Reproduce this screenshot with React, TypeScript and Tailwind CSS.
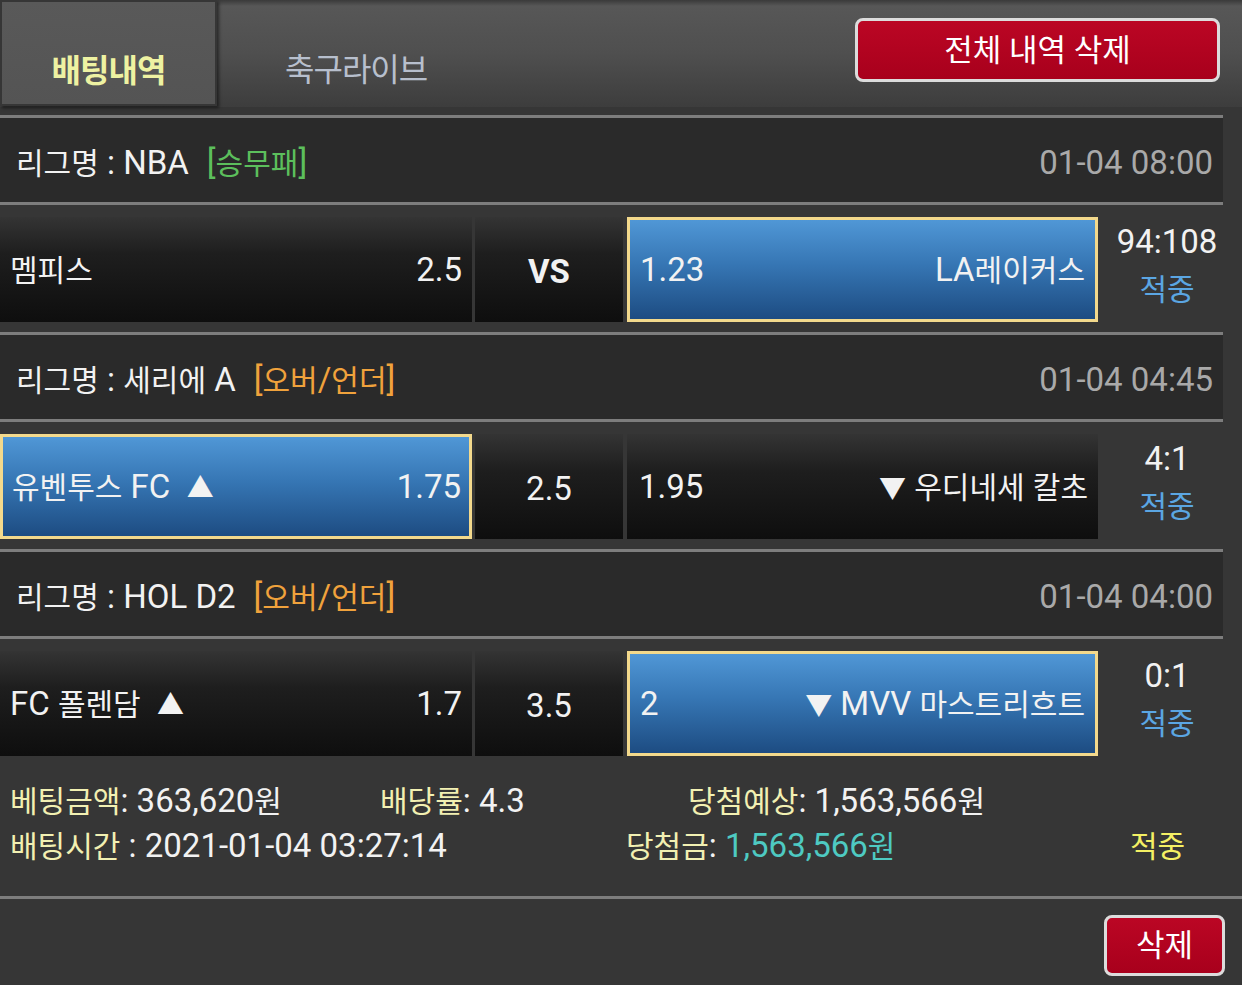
import React from "react";

function H({ t, k = "text-[30px]" }: { t: string; k?: string }) {
  const parts = t.split(/([\uAC00-\uD7A3\u3131-\u318E]+|[▲▼])/).filter((p) => p !== "");
  return (
    <>
      {parts.map((p, i) =>
        /^[▲▼]$/.test(p) ? (
          <span key={i} className="text-[27px]">
            {p}
          </span>
        ) : /[\uAC00-\uD7A3\u3131-\u318E]/.test(p) ? (
          <span key={i} className={k}>
            {p}
          </span>
        ) : (
          <span key={i}>{p}</span>
        )
      )}
    </>
  );
}

type Side = { text: string; odd: string; selected: boolean };
type Game = {
  league: string;
  tag: string;
  tagColor: string;
  date: string;
  home: Side;
  mid: string;
  midBold?: boolean;
  away: Side;
  score: string;
};

const games: Game[] = [
  {
    league: "NBA",
    tag: "[승무패]",
    tagColor: "text-[#5cbf5c]",
    date: "01-04 08:00",
    home: { text: "멤피스", odd: "2.5", selected: false },
    mid: "VS",
    midBold: true,
    away: { text: "LA레이커스", odd: "1.23", selected: true },
    score: "94:108",
  },
  {
    league: "세리에 A",
    tag: "[오버/언더]",
    tagColor: "text-[#f0a23c]",
    date: "01-04 04:45",
    home: { text: "유벤투스 FC  ▲", odd: "1.75", selected: true },
    mid: "2.5",
    away: { text: "▼ 우디네세 칼초", odd: "1.95", selected: false },
    score: "4:1",
  },
  {
    league: "HOL D2",
    tag: "[오버/언더]",
    tagColor: "text-[#f0a23c]",
    date: "01-04 04:00",
    home: { text: "FC 폴렌담  ▲", odd: "1.7", selected: false },
    mid: "3.5",
    away: { text: "▼ MVV 마스트리흐트", odd: "2", selected: true },
    score: "0:1",
  },
];

const darkCell =
  "bg-[linear-gradient(to_bottom,#343434_0%,#1e1e1e_35%,#0e0e0e_100%)]";
const blueCell =
  "bg-[linear-gradient(to_bottom,#5097d6_0%,#3676b4_45%,#1d4c82_100%)] border-[3px] border-[#f3d98c]";

function HomeCell({ s }: { s: Side }) {
  return (
    <div
      className={`w-[472px] h-[105px] flex items-center justify-between whitespace-pre ${
        s.selected ? blueCell + " pl-[9px] pr-[8px]" : darkCell + " pl-[10px] pr-[10px]"
      }`}
    >
      <span>
        <H t={s.text} />
      </span>
      <span>{s.odd}</span>
    </div>
  );
}

function AwayCell({ s }: { s: Side }) {
  return (
    <div
      className={`w-[471px] h-[105px] flex items-center justify-between whitespace-pre ${
        s.selected ? blueCell + " pl-[10px] pr-[10px]" : darkCell + " pl-[12px] pr-[10px]"
      }`}
    >
      <span>{s.odd}</span>
      <span>
        <H t={s.text} />
      </span>
    </div>
  );
}

const Y = ({ t }: { t: string }) => (
  <span className="text-[#f2f0b2] text-[30px]">{t}</span>
);

export default function App() {
  return (
    <div
      className="w-[1242px] h-[985px] overflow-hidden bg-[#363636] text-[33px] leading-none text-[#f2f2f2]"
      style={{ fontFamily: 'Roboto, "Noto Sans CJK KR", sans-serif' }}
    >
      {/* Header */}
      <div className="h-[107px] flex bg-[linear-gradient(to_bottom,#3a3a3a_0px,#575757_6px,#4f4f4f_50%,#3d3d3d_100%)]">
        <div className="w-[217px] h-[106px] bg-[linear-gradient(to_bottom,#595959,#545454)] border-[2px] border-[#363636] shadow-[2px_2px_3px_rgba(0,0,0,0.5)] flex justify-center items-center pt-[36px] font-bold text-[32px] text-[#eef2a2] tracking-[-1px]">
          배팅내역
        </div>
        <div className="flex items-center pt-[32px] pl-[68px] text-[32px] text-[#b7bfcd] tracking-[-1px]">
          축구라이브
        </div>
        <div className="flex-1 flex justify-end items-start pt-[18px] pr-[22px]">
          <div className="w-[365px] h-[64px] rounded-[8px] border-[3px] border-[#dcdcdc] bg-[linear-gradient(to_bottom,#bb0624,#a8001c)] flex items-center justify-center text-white text-[31px]">
            전체 내역 삭제
          </div>
        </div>
      </div>

      <div className="pt-[8px]">
        {games.map((g, i) => (
          <div key={i}>
            <div className="w-[1223px] h-[90px] border-y-[3px] border-[#7d7d7d] bg-[#2a2a2a] flex items-center justify-between pl-[16px] pr-[10px] pt-[5px]">
              <div className="flex items-baseline whitespace-pre">
                <span>
                  <H t={`리그명 : ${g.league}`} />
                </span>
                <span className={`ml-[18px] ${g.tagColor}`}>
                  <H t={g.tag} />
                </span>
              </div>
              <span className="text-[#a9a9a9]">{g.date}</span>
            </div>
            <div className="flex items-start pt-[12px] pb-[10px]">
              <HomeCell s={g.home} />
              <div
                className={`ml-[3px] w-[148px] h-[105px] flex items-center justify-center pt-[3px] ${darkCell} ${
                  g.midBold ? "font-bold" : ""
                }`}
              >
                {g.mid}
              </div>
              <div className="ml-[4px]">
                <AwayCell s={g.away} />
              </div>
              <div className="flex-1 flex flex-col items-center pt-[8px] gap-[17px] pr-[6px]">
                <span>{g.score}</span>
                <span className="text-[#5ba6e3] text-[30px]">적중</span>
              </div>
            </div>
          </div>
        ))}

        {/* summary */}
        <div className="pt-[18px] pl-[10px] flex flex-col gap-[12px] whitespace-pre">
          <div className="flex items-baseline">
            <span className="w-[370px]">
              <Y t="베팅금액" />: 363,620<H t="원" />
            </span>
            <span className="w-[308px]">
              <Y t="배당률" />: 4.3
            </span>
            <span>
              <Y t="당첨예상" />: 1,563,566<H t="원" />
            </span>
          </div>
          <div className="flex items-baseline">
            <span className="w-[616px]">
              <Y t="배팅시간" /> : 2021-01-04 03:27:14
            </span>
            <span className="w-[504px]">
              <Y t="당첨금" />:{" "}
              <span className="text-[#4ecac2]">
                1,563,566<H t="원" />
              </span>
            </span>
            <span className="text-[#f4f064] text-[30px]">적중</span>
          </div>
        </div>

        <div className="mt-[34px] h-[3px] bg-[#7d7d7d]" />
        <div className="flex justify-end pr-[17px] pt-[16px]">
          <div className="w-[121px] h-[61px] rounded-[8px] border-[3px] border-[#dcdcdc] bg-[linear-gradient(to_bottom,#bb0624,#a8001c)] flex items-center justify-center text-white text-[31px]">
            삭제
          </div>
        </div>
      </div>
    </div>
  );
}
